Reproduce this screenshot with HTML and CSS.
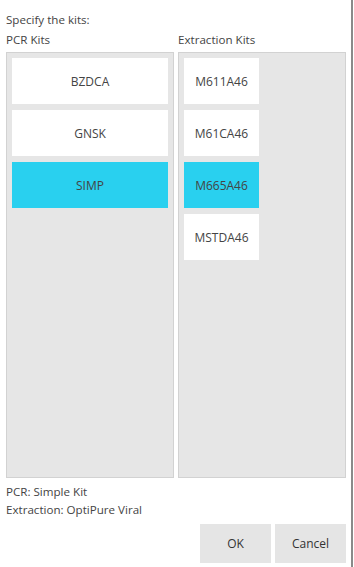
FILE: index.html
```html
<!DOCTYPE html>
<html>
<head>
<meta charset="utf-8">
<link rel="stylesheet" href="styles.css">
</head>
<body>
<div class="dialog">
  <div class="title">Specify the kits:</div>
  <div class="lists">
    <div class="col">
      <div class="col-label">PCR Kits</div>
      <div class="panel">
        <div class="item wide">BZDCA</div>
        <div class="item wide">GNSK</div>
        <div class="item wide selected">SIMP</div>
      </div>
    </div>
    <div class="col">
      <div class="col-label">Extraction Kits</div>
      <div class="panel">
        <div class="item narrow">M611A46</div>
        <div class="item narrow">M61CA46</div>
        <div class="item narrow selected">M665A46</div>
        <div class="item narrow">MSTDA46</div>
      </div>
    </div>
  </div>
  <div class="summary first">PCR: Simple Kit</div>
  <div class="summary">Extraction: OptiPure Viral</div>
  <div class="buttons">
    <div class="btn">OK</div>
    <div class="btn">Cancel</div>
  </div>
</div>
</body>
</html>
```
FILE: styles.css
```css
html, body {
  margin: 0;
  padding: 0;
  background: #ffffff;
}
.dialog {
  width: 353px;
  height: 567px;
  box-sizing: border-box;
  border-right: 2px solid #8a8a8a;
  padding: 10px 5px 0 6px;
  font-family: "Open Sans", "Noto Sans", sans-serif;
  font-size: 11.6px;
  color: #444;
  display: flex;
  flex-direction: column;
}
.title {
  line-height: 20px;
  height: 20px;
}
.lists {
  display: grid;
  grid-template-columns: 168px 168px;
  column-gap: 4px;
}
.col {
  display: flex;
  flex-direction: column;
}
.col-label {
  line-height: 20px;
  height: 20px;
  margin-bottom: 2px;
}
.panel {
  height: 426px;
  box-sizing: border-box;
  background: #e6e6e6;
  border: 1px solid #d2d2d2;
  padding: 5px;
  display: flex;
  flex-direction: column;
  gap: 6px;
}
.item {
  height: 46px;
  background: #ffffff;
  display: flex;
  align-items: center;
  justify-content: center;
  font-size: 12px;
  color: #444;
}
.item.wide {
  width: 156px;
}
.item.narrow {
  width: 75px;
}
.item.selected {
  background: #29d0ef;
}
.summary {
  line-height: 18px;
  height: 18px;
}
.summary.first {
  margin-top: 5px;
}
.buttons {
  margin-top: 5px;
  display: flex;
  justify-content: flex-end;
  gap: 4px;
  width: 340px;
}
.btn {
  width: 71px;
  height: 39px;
  background: #e5e5e5;
  display: flex;
  align-items: center;
  justify-content: center;
  font-size: 12px;
  color: #333;
}
```
